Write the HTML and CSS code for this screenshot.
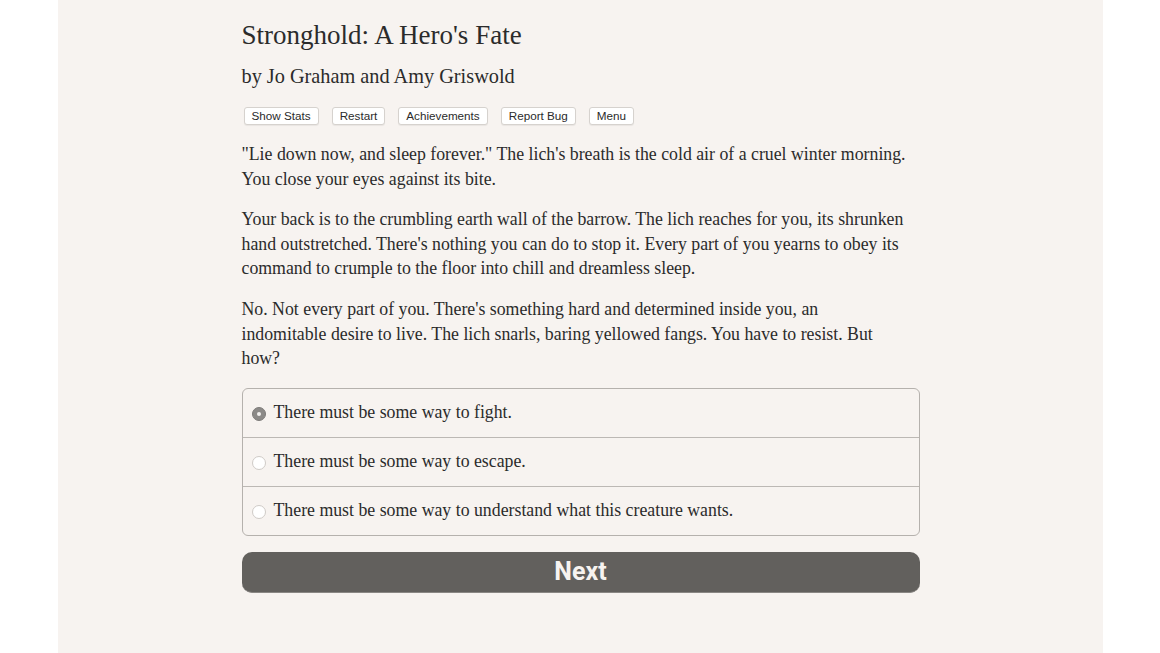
FILE: index.html
```html
<!DOCTYPE html>
<html>
<head>
<meta charset="utf-8">
<link rel="stylesheet" href="styles.css">
</head>
<body>
<div class="page">
  <div class="column">
    <h1 class="title">Stronghold: A Hero's Fate</h1>
    <h2 class="author">by Jo Graham and Amy Griswold</h2>
    <div class="toolbar">
      <button class="tbtn">Show Stats</button>
      <button class="tbtn">Restart</button>
      <button class="tbtn">Achievements</button>
      <button class="tbtn">Report Bug</button>
      <button class="tbtn">Menu</button>
    </div>
    <p class="para">"Lie down now, and sleep forever." The lich's breath is the cold air of a cruel winter morning. You close your eyes against its bite.</p>
    <p class="para">Your back is to the crumbling earth wall of the barrow. The lich reaches for you, its shrunken hand outstretched. There's nothing you can do to stop it. Every part of you yearns to obey its command to crumple to the floor into chill and dreamless sleep.</p>
    <p class="para">No. Not every part of you. There's something hard and determined inside you, an<br>indomitable desire to live. The lich snarls, baring yellowed fangs. You have to resist. But<br>how?</p>
    <div class="choices">
      <label class="choice"><span class="radio checked"></span>There must be some way to fight.</label>
      <label class="choice"><span class="radio"></span>There must be some way to escape.</label>
      <label class="choice"><span class="radio"></span>There must be some way to understand what this creature wants.</label>
    </div>
    <button class="next">Next</button>
  </div>
</div>
</body>
</html>
```
FILE: styles.css
```css
html, body {
  margin: 0;
  padding: 0;
  background: #ffffff;
}
.page {
  margin: 0 57px 0 58px;
  background: #f7f3f0;
  height: 653px;
  display: flex;
  justify-content: center;
}
.column {
  width: 678px;
  margin-left: 0;
  font-family: "Liberation Serif", "Times New Roman", serif;
  color: #2b2b2b;
}
.title {
  margin: 18px 0 0 0;
  font-weight: normal;
  font-size: 27px;
  line-height: 34px;
}
.author {
  margin: 11px 0 0 0;
  font-weight: normal;
  font-size: 20.3px;
  line-height: 26px;
}
.toolbar {
  display: flex;
  gap: 13px;
  margin: 18px 0 0 2px;
}
.tbtn {
  font-family: "Liberation Sans", Arial, sans-serif;
  font-size: 11.7px;
  color: #2b2b2b;
  background: #ffffff;
  border: 1px solid #d6d2ce;
  border-radius: 3px;
  box-shadow: 0 1px 1px rgba(0, 0, 0, 0.06);
  height: 18px;
  padding: 0 7px;
  line-height: 16px;
}
.para {
  margin: 16px 0 0 0;
  font-size: 17.8px;
  line-height: 24.6px;
}
.para:first-of-type {
  margin-top: 17px;
}
.choices {
  margin-top: 17px;
  border: 1px solid #b5b1ad;
  border-radius: 6px;
}
.choice {
  display: flex;
  align-items: center;
  height: 48px;
  padding-left: 9px;
  font-size: 17.8px;
  border-top: 1px solid #bcb8b4;
}
.choice:first-child {
  border-top: none;
}
.radio {
  width: 14px;
  height: 14px;
  border-radius: 50%;
  background: #ffffff;
  border: 1px solid #cfcbc7;
  margin-right: 8px;
  box-sizing: border-box;
  position: relative;
  top: 1px;
}
.radio.checked {
  background: #8c8a88;
  border-color: #7d7b79;
  display: flex;
  align-items: center;
  justify-content: center;
}
.radio.checked::after {
  content: "";
  width: 4px;
  height: 4px;
  border-radius: 50%;
  background: #f2f0ee;
}
.next {
  display: block;
  width: 100%;
  margin-top: 16px;
  height: 41px;
  background: #62605d;
  color: #f7f3f0;
  border: none;
  border-bottom: 1px solid #8a8784;
  border-radius: 10px;
  font-family: "Roboto", "Liberation Sans", sans-serif;
  font-weight: bold;
  font-size: 25px;
}
```
